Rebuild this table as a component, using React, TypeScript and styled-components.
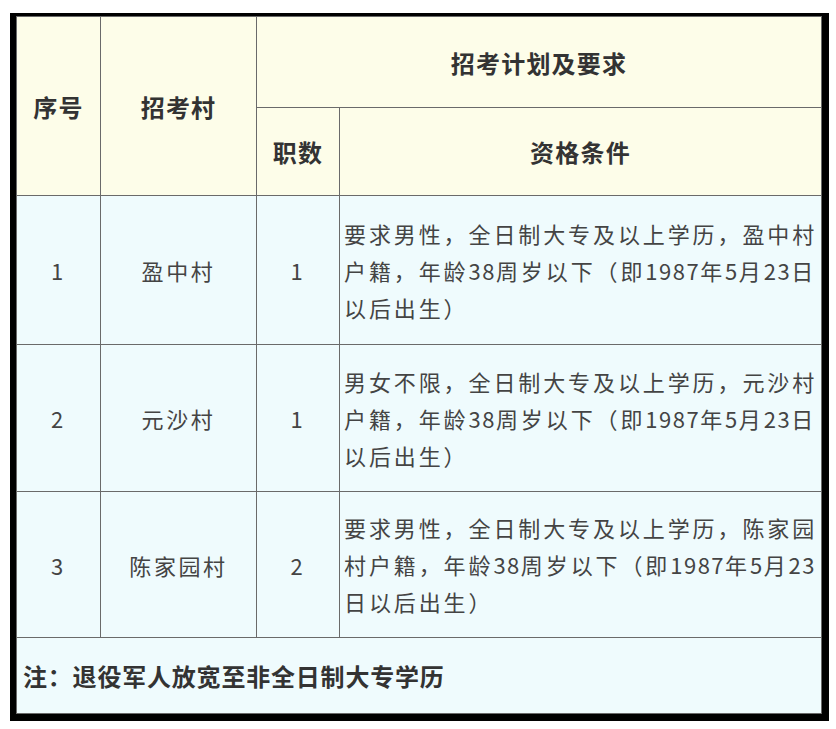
import React from "react";
import styled, { createGlobalStyle } from "styled-components";

const GlobalStyle = createGlobalStyle`
  html, body { margin: 0; padding: 0; background: #ffffff; }
  body { font-family: "Noto Sans CJK SC", "Noto Sans", sans-serif; }
`;

const Page = styled.div`
  padding: 13px 0 0 10px;
`;

const Frame = styled.div`
  display: inline-block;
  background: #000;
  padding: 3px 7px 7px 6px;
`;

const Table = styled.table`
  border-collapse: collapse;
  table-layout: fixed;
  width: 805px;
  font-family: "Noto Sans CJK SC", "Noto Sans", sans-serif;
`;

const Row = styled.tr<{ $h: number }>`
  height: ${(p) => p.$h}px;
`;

const HeadCell = styled.th`
  background: #fdfde9;
  border: 1px solid #6a6a6a;
  color: #333;
  font-size: 24px;
  font-weight: 700;
  letter-spacing: 1.2px;
  text-align: center;
  vertical-align: middle;
  padding: 0;
`;

const Cell = styled.td`
  background: #effbfd;
  border: 1px solid #6a6a6a;
  color: #444;
  font-size: 22px;
  font-weight: 400;
  letter-spacing: 2.6px;
  text-align: center;
  vertical-align: middle;
  padding: 0;
`;

const DescCell = styled(Cell)`
  text-align: left;
  letter-spacing: 2.9px;
  line-height: 37px;
  padding: 0 0 0 4px;
`;

const DescLine = styled.div`
  white-space: nowrap;
`;

const Num = styled.span`
  letter-spacing: 1.5px;
`;

const NoteCell = styled(Cell)`
  text-align: left;
  color: #333;
  font-weight: 700;
  font-size: 24px;
  letter-spacing: 0.8px;
  padding: 0 0 0 6px;
`;

const withNums = (text: string) =>
  text.split(/(\d+)/).map((part, i) =>
    /^\d+$/.test(part) ? <Num key={i}>{part}</Num> : <React.Fragment key={i}>{part}</React.Fragment>
  );

const rows = [
  {
    no: "1",
    village: "盈中村",
    count: "1",
    req: ["要求男性，全日制大专及以上学历，盈中村", "户籍，年龄38周岁以下（即1987年5月23日", "以后出生）"],
    h: 149,
  },
  {
    no: "2",
    village: "元沙村",
    count: "1",
    req: ["男女不限，全日制大专及以上学历，元沙村", "户籍，年龄38周岁以下（即1987年5月23日", "以后出生）"],
    h: 147,
  },
  {
    no: "3",
    village: "陈家园村",
    count: "2",
    req: ["要求男性，全日制大专及以上学历，陈家园", "村户籍，年龄38周岁以下（即1987年5月23", "日以后出生）"],
    h: 146,
  },
];

export default function App() {
  return (
    <>
      <GlobalStyle />
      <Page>
        <Frame>
          <Table>
            <colgroup>
              <col style={{ width: 84 }} />
              <col style={{ width: 156 }} />
              <col style={{ width: 83 }} />
              <col style={{ width: 482 }} />
            </colgroup>
            <thead>
              <Row $h={91}>
                <HeadCell rowSpan={2}>序号</HeadCell>
                <HeadCell rowSpan={2}>招考村</HeadCell>
                <HeadCell colSpan={2}>招考计划及要求</HeadCell>
              </Row>
              <Row $h={88}>
                <HeadCell>职数</HeadCell>
                <HeadCell>资格条件</HeadCell>
              </Row>
            </thead>
            <tbody>
              {rows.map((r) => (
                <Row key={r.no} $h={r.h}>
                  <Cell>{r.no}</Cell>
                  <Cell>{r.village}</Cell>
                  <Cell>{r.count}</Cell>
                  <DescCell>
                    {r.req.map((line, i) => (
                      <DescLine key={i}>{withNums(line)}</DescLine>
                    ))}
                  </DescCell>
                </Row>
              ))}
              <Row $h={76}>
                <NoteCell colSpan={4}>注：退役军人放宽至非全日制大专学历</NoteCell>
              </Row>
            </tbody>
          </Table>
        </Frame>
      </Page>
    </>
  );
}
